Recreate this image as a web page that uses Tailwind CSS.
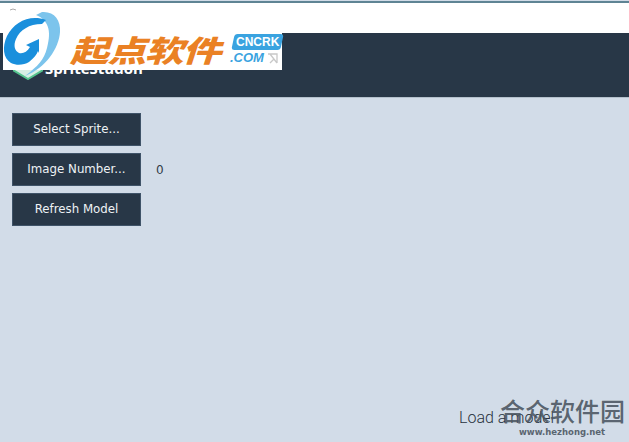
<!DOCTYPE html>
<html lang="en">
<head>
    <meta charset="UTF-8">
    <title>SpriteStudio</title>
    <script src="https://cdn.jsdelivr.net/npm/@tailwindcss/browser@4"></script>
</head>
<body class="relative w-[629px] h-[442px] overflow-hidden bg-[#d2dce8] font-['DejaVu_Sans',sans-serif]">
    <!-- window top -->
    <div class="h-[33px] bg-white border-t-2 border-[#5f8494] mt-[1px]"></div>

    <!-- app header -->
    <div class="h-[65px] bg-[#283747] border-b border-[#b4c0cc] flex items-end pl-[45px] pb-[18px] mt-[-1px]">
        <span class="text-white text-[15px] leading-[22px] font-bold font-['Open_Sans',sans-serif]">SpriteStudon</span>
    </div>

    <!-- buttons -->
    <div class="flex flex-col gap-[7px] pl-[12px] pt-[15px]">
        <div class="flex items-center">
            <button class="w-[129px] h-[33px] pt-px bg-[#283747] border border-[#3f5368] text-[#eef2f5] text-[11.8px]">Select Sprite...</button>
        </div>
        <div class="flex items-center">
            <button class="w-[129px] h-[33px] pt-px bg-[#283747] border border-[#3f5368] text-[#eef2f5] text-[11.8px]">Image Number...</button>
            <span class="ml-[15px] text-[12px] text-[#333d48]">0</span>
        </div>
        <div class="flex items-center">
            <button class="w-[129px] h-[33px] pt-px bg-[#283747] border border-[#3f5368] text-[#eef2f5] text-[11.8px]">Refresh Model</button>
        </div>
    </div>

    <!-- status text -->
    <div class="absolute left-[459px] top-[408px] text-[16px] leading-[20px] font-light text-[#28323e] font-['Roboto',sans-serif]">Load a model</div>

    <!-- green logo tip under watermark -->
    <svg class="absolute left-[13px] top-[68px]" width="30" height="12" viewBox="0 0 30 12">
        <path d="M0 2 L15 11 L30 2" fill="#d8f0e4" stroke="#55c48e" stroke-width="2"/>
    </svg>

    <!-- cncrk watermark -->
    <div class="absolute left-[3px] top-[8px] w-[279px] h-[62px] bg-white"></div>
    <svg class="absolute left-0 top-0" width="80" height="85" viewBox="0 0 80 85">
        <path d="M10 10 Q13 8 16 10" fill="none" stroke="#aaa" stroke-width="1"/>
        <path d="M42 12 C54 11 61 20 60 32 C59 48 46 68 25 76 C38 66 44 60 47 48 C52 30 48 20 36 15 Z" fill="#7cc4ec"/>
        <path d="M46 20 C30 14 14 22 7 36 C2 47 3 58 11 63 C17 66 24 65 29 62 C34 58 37 54 38 51 L39 53 L39 39 L26 45 L30 47 C27 52 23 54 19 53 C15 51 13 46 16 39 C20 30 29 24 42 24 Z" fill="#1a8fdc"/>
    </svg>
    <div class="absolute left-[70px] top-[29px] text-[#ea8124] text-[30px] leading-[40px] font-black italic tracking-[-1px] origin-left scale-x-[1.29] font-['Noto_Sans_CJK_SC',sans-serif]">起点软件</div>
    <div class="absolute left-[233px] top-[34px] w-[49px] h-[16px] bg-[#3aa3e0] rounded-[3px] -skew-x-12 flex items-center justify-center">
        <span class="text-white text-[12px] font-bold leading-none skew-x-12 font-['Liberation_Sans',sans-serif]">CNCRK</span>
    </div>
    <div class="absolute left-[230px] top-[51px] text-[#3aa3e0] text-[13px] font-bold italic leading-[14px] font-['Liberation_Sans',sans-serif]">.COM</div>
    <svg class="absolute left-[267px] top-[53px]" width="11" height="11" viewBox="0 0 11 11" fill="none" stroke="#c8c8c8" stroke-width="1.3">
        <path d="M1 1 H10 V10 M3 1 L10 10 M3 10 L7 6"/>
    </svg>

    <!-- hezhong watermark -->
    <div class="absolute left-[500px] top-[394px] text-[25px] leading-[32px] font-medium text-[#4a5560]/90 font-['Noto_Sans_CJK_SC',sans-serif]">合众软件园</div>
    <div class="absolute left-[519px] top-[425px] text-[8.5px] leading-[14px] font-bold text-[#5a6570] font-['DejaVu_Sans',sans-serif]">www.hezhong.net</div>
</body>
</html>
